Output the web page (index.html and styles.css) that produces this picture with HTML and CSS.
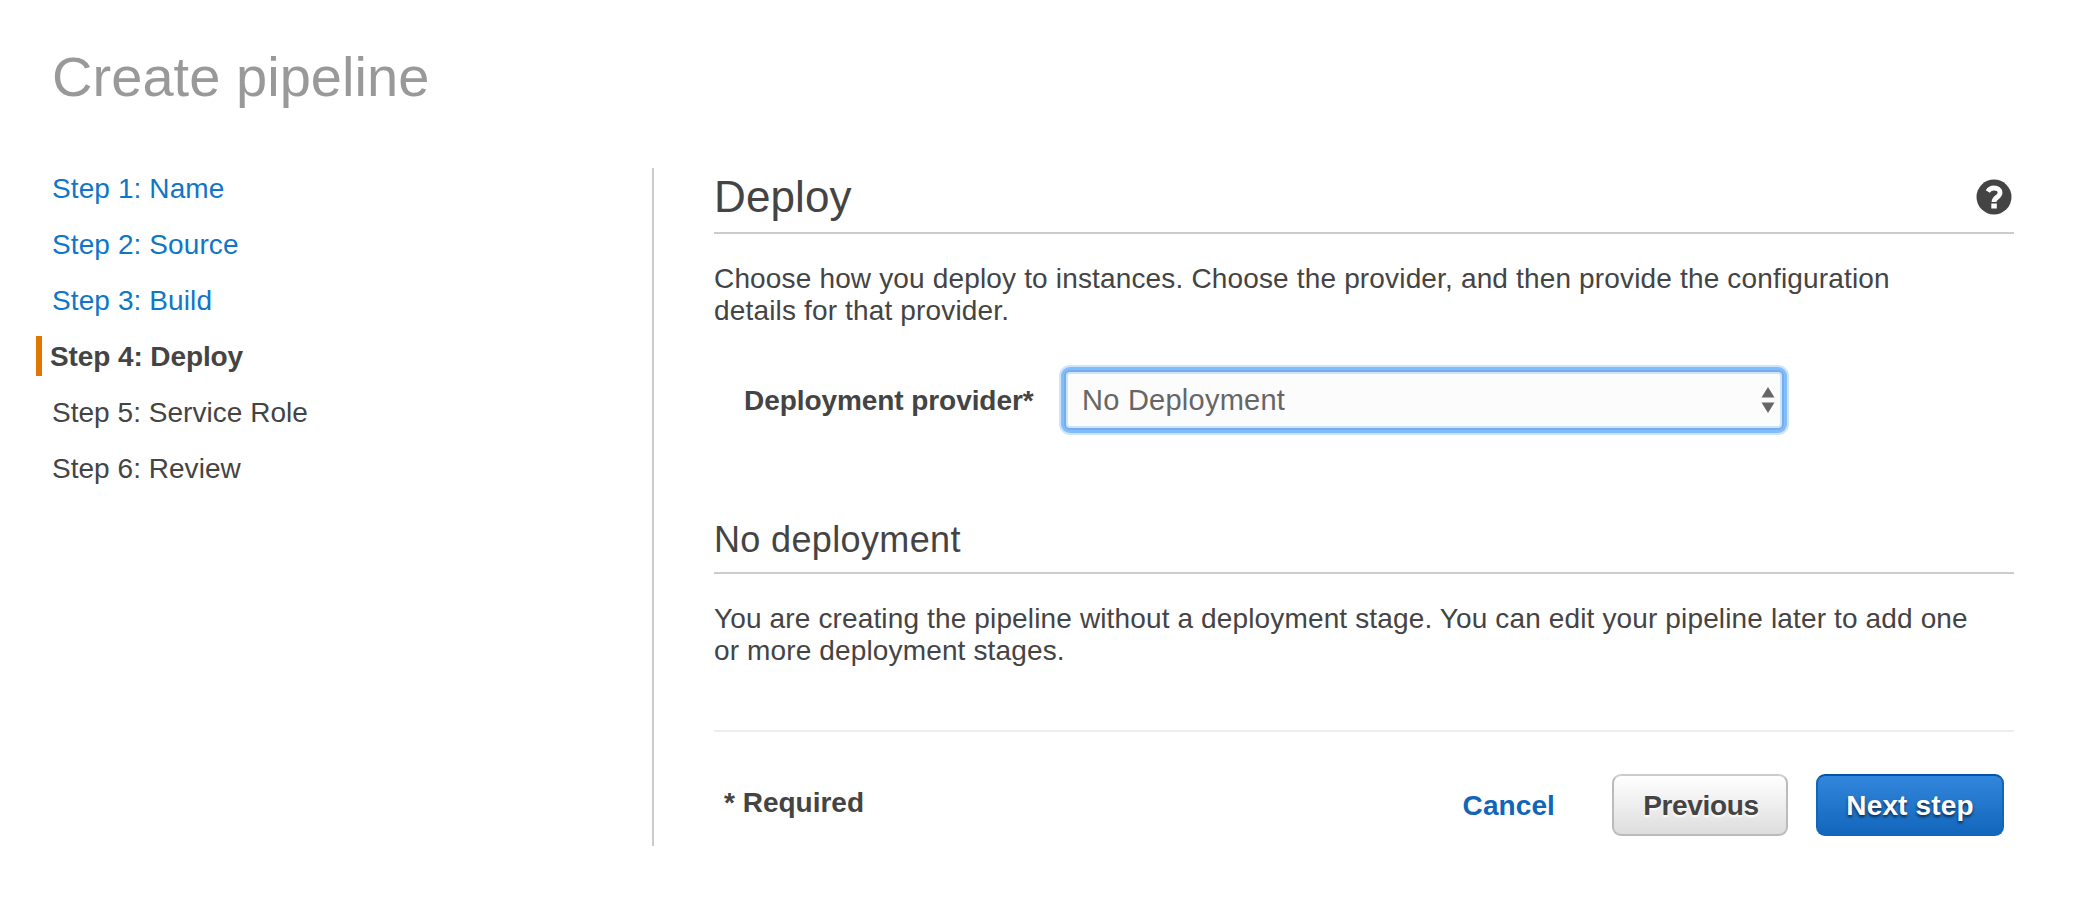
FILE: index.html
```html
<!DOCTYPE html>
<html lang="en">
<head>
<meta charset="utf-8">
<title>Create pipeline</title>
<link rel="stylesheet" href="styles.css">
</head>
<body>
<h1 class="page-title">Create pipeline</h1>
<div class="wizard">
  <nav class="steps">
    <a class="step link">Step 1: Name</a>
    <a class="step link">Step 2: Source</a>
    <a class="step link">Step 3: Build</a>
    <span class="step current">Step 4: Deploy</span>
    <span class="step">Step 5: Service Role</span>
    <span class="step">Step 6: Review</span>
  </nav>
  <main class="panel">
    <header class="panel-head">
      <h2 class="heading">Deploy</h2>
      <svg class="help" viewBox="0 0 36 36" aria-label="Help"><circle cx="18" cy="18" r="17.500" fill="#444"/><path d="M11.800 12.400C13.300 10 15.300 9 18 9c3.500 0 6 1.700 6 4.700 0 4.500-6 4.600-6 9.300" fill="none" stroke="#fff" stroke-width="4.800"/><path d="M15.300 24.500h5.500v5h-5.500z" fill="#fff"/></svg>
    </header>
    <p class="intro">Choose how you deploy to instances. Choose the provider, and then provide the configuration<br>details for that provider.</p>
    <div class="field">
      <label class="label">Deployment provider*</label>
      <div class="select"><span class="value">No Deployment</span><svg class="arrows" viewBox="0 0 14 26"><path d="M7 0l6.500 10.500H.5zM.5 15.500h13L7 26z" fill="#666"/></svg></div>
    </div>
    <h3 class="subheading">No deployment</h3>
    <p class="note">You are creating the pipeline without a deployment stage. You can edit your pipeline later to add one<br>or more deployment stages.</p>
    <footer class="actions">
      <span class="required">* Required</span>
      <a class="cancel">Cancel</a>
      <button class="btn previous">Previous</button>
      <button class="btn next">Next step</button>
    </footer>
  </main>
</div>
</body>
</html>
```
FILE: styles.css
```css
* { box-sizing: border-box; }
body { margin: 0; background: #fff; color: #444; font: 28px/32px "Liberation Sans", Arial, sans-serif; }
h1, h2, h3, p { margin: 0; font-weight: 400; white-space: nowrap; }
.page-title { padding: 45px 0 0 52px; height: 168px; color: #999; font-size: 56px; line-height: 64px; letter-spacing: 0.05px; }
.wizard { display: flex; height: 678px; }
.steps { display: flex; flex-direction: column; gap: 16px; width: 652px; padding-left: 36px; }
.step { height: 40px; line-height: 42px; padding-left: 16px; white-space: nowrap; letter-spacing: 0.03px; }
.link { color: #0f76c8; letter-spacing: 0.1px; }
.current { border-left: 6px solid #e07700; padding-left: 8px; font-weight: 700; letter-spacing: -0.1px; }
.panel { width: 1362px; border-left: 2px solid #ccc; padding-left: 60px; }
.panel-head { display: flex; justify-content: space-between; height: 66px; border-bottom: 2px solid #ccc; padding: 4px 2px 0 0; }
.heading { font-size: 44px; line-height: 50px; letter-spacing: 0.1px; }
.help { width: 36px; height: 36px; margin-top: 7px; }
.intro { padding-top: 29px; height: 131px; letter-spacing: 0.16px; }
.field { display: flex; align-items: center; height: 70px; padding-left: 30px; }
.label { width: 320px; padding-top: 1px; font-weight: 700; white-space: nowrap; letter-spacing: -0.07px; }
.select { display: flex; align-items: center; justify-content: space-between; width: 720px; height: 60px; padding: 0 7px 0 16px; background: #fcfcfc; color: #666; border: 2px solid #74acee; border-radius: 6px; box-shadow: inset 0 0 0 2px #cbe5fd, 0 0 0 3px #84bbfb, 0 0 0 5px #cbe5fd; }
.value { font-size: 29px; letter-spacing: 0.25px; }
.arrows { width: 14px; height: 26px; }
.subheading { margin-top: 74px; height: 65px; border-bottom: 2px solid #ccc; font-size: 36px; line-height: 61px; letter-spacing: 0.36px; }
.note { padding-top: 29px; height: 156px; letter-spacing: 0.14px; }
.actions { display: flex; align-items: center; height: 106px; padding: 42px 10px 0 10px; border-top: 2px solid #eee; font-weight: 700; }
.required { margin-right: auto; padding-bottom: 5px; }
.cancel { padding-top: 2px; margin-right: 57px; color: #1166bb; letter-spacing: 0.1px; }
.btn { height: 62px; padding: 2px 0 0; border: 2px solid #bbb; border-radius: 9px; font: inherit; color: #444; }
.previous { width: 176px; margin-right: 28px; padding-left: 2px; letter-spacing: -0.35px; border-top-color: #ccc; background: linear-gradient(#fff, #ddd); text-shadow: 0 2px 2px #fff; }
.next { width: 188px; color: #fff; border-color: #1166bb; border-top-color: #0055aa; background: linear-gradient(#3388dd, #1166bb) border-box; text-shadow: 0 2px 3px #000a; letter-spacing: 0.15px; }
```
